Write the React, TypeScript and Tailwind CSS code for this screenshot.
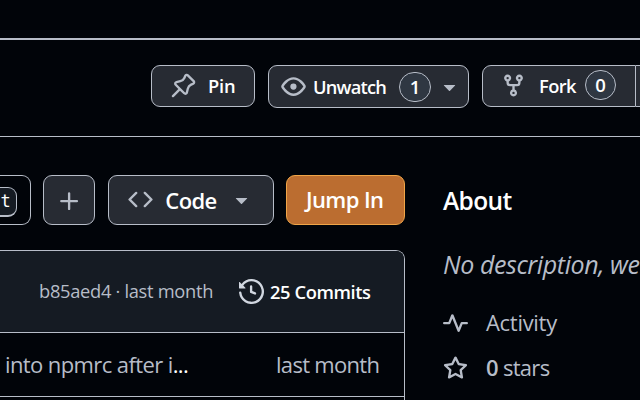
import type { ReactNode } from "react";

const paths = {
  pin: "m11.294.984 3.722 3.722a1.75 1.75 0 0 1-.504 2.826l-1.327.613a3.089 3.089 0 0 0-1.707 2.084l-.584 2.454c-.317 1.332-1.972 1.8-2.94.832L5.75 11.311 1.78 15.28a.749.749 0 1 1-1.06-1.06l3.969-3.97-2.204-2.204c-.968-.968-.5-2.623.832-2.94l2.454-.584a3.08 3.08 0 0 0 2.084-1.707l.613-1.327a1.75 1.75 0 0 1 2.826-.504ZM6.283 9.723l2.732 2.731a.25.25 0 0 0 .42-.119l.584-2.454a4.586 4.586 0 0 1 2.537-3.098l1.328-.613a.25.25 0 0 0 .072-.404l-3.722-3.722a.25.25 0 0 0-.404.072l-.613 1.328a4.584 4.584 0 0 1-3.098 2.537l-2.454.584a.25.25 0 0 0-.119.42l2.731 2.732Z",
  eye: "M8 2c1.981 0 3.671.992 4.933 2.078 1.27 1.091 2.187 2.345 2.637 3.023a1.62 1.62 0 0 1 0 1.798c-.45.678-1.367 1.932-2.637 3.023C11.67 13.008 9.981 14 8 14c-1.981 0-3.671-.992-4.933-2.078C1.797 10.83.88 9.576.43 8.898a1.62 1.62 0 0 1 0-1.798c.45-.677 1.367-1.931 2.637-3.022C4.33 2.992 6.019 2 8 2ZM1.679 7.932a.12.12 0 0 0 0 .136c.411.622 1.241 1.75 2.366 2.717C5.176 11.758 6.527 12.5 8 12.5c1.473 0 2.825-.742 3.955-1.715 1.124-.967 1.954-2.096 2.366-2.717a.12.12 0 0 0 0-.136c-.412-.621-1.242-1.75-2.366-2.717C10.824 4.242 9.473 3.5 8 3.5c-1.473 0-2.825.742-3.955 1.715-1.124.967-1.954 2.096-2.366 2.717ZM8 10a2 2 0 1 1-.001-3.999A2 2 0 0 1 8 10Z",
  fork: "M5 5.372v.878c0 .414.336.75.75.75h4.5a.75.75 0 0 0 .75-.75v-.878a2.25 2.25 0 1 1 1.5 0v.878a2.25 2.25 0 0 1-2.25 2.25h-1.5v2.128a2.251 2.251 0 1 1-1.5 0V8.5h-1.5A2.25 2.25 0 0 1 3.5 6.25v-.878a2.25 2.25 0 1 1 1.5 0ZM5 3.25a.75.75 0 1 0-1.5 0 .75.75 0 0 0 1.5 0Zm6.75.75a.75.75 0 1 0 0-1.5.75.75 0 0 0 0 1.5Zm-3 8.75a.75.75 0 1 0-1.5 0 .75.75 0 0 0 1.5 0Z",
  caret: "m4.427 7.427 3.396 3.396a.25.25 0 0 0 .354 0l3.396-3.396A.25.25 0 0 0 11.396 7H4.604a.25.25 0 0 0-.177.427Z",
  plus: "M7.75 2a.75.75 0 0 1 .75.75V7h4.25a.75.75 0 0 1 0 1.5H8.5v4.25a.75.75 0 0 1-1.5 0V8.5H2.75a.75.75 0 0 1 0-1.5H7V2.75A.75.75 0 0 1 7.75 2Z",
  code: "m11.28 3.22 4.25 4.25a.75.75 0 0 1 0 1.06l-4.25 4.25a.749.749 0 0 1-1.275-.326.749.749 0 0 1 .215-.734L13.94 8l-3.72-3.72a.749.749 0 0 1 .326-1.275.749.749 0 0 1 .734.215Zm-6.56 0a.751.751 0 0 1 1.042.018.751.751 0 0 1 .018 1.042L2.06 8l3.72 3.72a.749.749 0 0 1-.326 1.275.749.749 0 0 1-.734-.215L.47 8.53a.75.75 0 0 1 0-1.06Z",
  history: "m.427 1.927 1.215 1.215a8.002 8.002 0 1 1-1.6 5.685.75.75 0 1 1 1.493-.154 6.5 6.5 0 1 0 1.18-4.458l1.358 1.358A.25.25 0 0 1 3.896 6H.25A.25.25 0 0 1 0 5.75V2.104a.25.25 0 0 1 .427-.177ZM7.75 4a.75.75 0 0 1 .75.75v2.992l2.028.812a.75.75 0 0 1-.557 1.392l-2.5-1A.751.751 0 0 1 7 8.25v-3.5A.75.75 0 0 1 7.75 4Z",
  pulse: "M6 2c.306 0 .582.187.696.471L10 10.731l1.304-3.26A.751.751 0 0 1 12 7h3.25a.75.75 0 0 1 0 1.5h-2.742l-1.812 4.528a.751.751 0 0 1-1.392 0L6 4.77 4.696 8.03A.75.75 0 0 1 4 8.5H.75a.75.75 0 0 1 0-1.5h2.742l1.812-4.529A.751.751 0 0 1 6 2Z",
  star: "M8 .25a.75.75 0 0 1 .673.418l1.882 3.815 4.21.612a.75.75 0 0 1 .416 1.279l-3.046 2.97.719 4.192a.751.751 0 0 1-1.088.791L8 12.347l-3.766 1.98a.75.75 0 0 1-1.088-.79l.72-4.194L.818 6.374a.75.75 0 0 1 .416-1.28l4.21-.611L7.327.668A.75.75 0 0 1 8 .25Zm0 2.445L6.615 5.5a.75.75 0 0 1-.564.41l-3.097.45 2.24 2.184a.75.75 0 0 1 .216.664l-.528 3.084 2.769-1.456a.75.75 0 0 1 .698 0l2.77 1.456-.53-3.084a.75.75 0 0 1 .216-.664l2.24-2.183-3.096-.45a.75.75 0 0 1-.564-.41L8 2.694Z",
};

function Icon({ name, className = "" }: { name: keyof typeof paths; className?: string }) {
  return (
    <svg viewBox="0 0 16 16" className={`size-[25px] shrink-0 fill-current ${className}`} aria-hidden="true">
      <path d={paths[name]} />
    </svg>
  );
}

function Counter({ children, className }: { children: ReactNode; className: string }) {
  return (
    <span className={`flex shrink-0 items-center justify-center rounded-full border border-[#b7bdc8] bg-[#2f3742] text-[18.5px] leading-none ${className}`}>
      {children}
    </span>
  );
}

const button = "flex shrink-0 items-start border border-[#b7bdc8] bg-[#272b33] font-[650] text-white";

function RepoActions() {
  return (
    <div className="flex h-[97px] shrink-0 items-start border-b border-[#b7bdc8] pt-[25px] pl-[151px]">
      <button className={`${button} h-[42px] w-[104px] rounded-[9px] pl-[19px]`}>
        <Icon name="pin" className="mt-[7px] text-[#b7bdc8]" />
        <span className="mt-[6px] ml-3 text-[18.3px] leading-7 tracking-[-0.2px]">Pin</span>
      </button>
      <button className={`${button} ml-[13px] h-[43px] w-[201px] rounded-[9px] pl-3`}>
        <Icon name="eye" className="mt-2 text-[#b7bdc8]" />
        <span className="mt-[7px] ml-[6px] w-[75px] text-[18.3px] leading-7 tracking-[-0.8px]">Unwatch</span>
        <Counter className="mt-[6px] ml-[12px] h-[30px] w-8">1</Counter>
        <Icon name="caret" className="mt-2 ml-[6px] text-[#b7bdc8]" />
      </button>
      <button className={`${button} ml-[13px] h-[42px] w-[154px] rounded-l-[9px] pl-[18px]`}>
        <Icon name="fork" className="mt-[7px] text-[#b7bdc8]" />
        <span className="mt-[6px] ml-3 w-[39px] text-[18.3px] leading-7 tracking-[-0.6px]">Fork</span>
        <Counter className="mt-1 ml-[8px] h-[30px] w-[31px]">0</Counter>
      </button>
      <div className="h-[42px] w-1 shrink-0 border-y border-[#b7bdc8] bg-[#272b33]" />
    </div>
  );
}

function Toolbar() {
  return (
    <div className="flex h-[50px] shrink-0">
      <div className="flex w-[31px] shrink-0 items-start justify-end rounded-r-[9px] border border-l-0 border-[#b7bdc8] pr-[13px]">
        <kbd className="mt-[11px] flex h-[30px] w-[17px] items-start justify-center rounded-r-[9px] border border-b-2 border-l-0 border-[#b7bdc8] bg-[#151b23] pr-[5px] font-['DejaVu_Sans_Mono',monospace] text-[17px] leading-[27px] text-white">
          t
        </kbd>
      </div>
      <button className={`${button} ml-3 w-[52px] rounded-[9px] pt-[13px] pl-[13px]`}>
        <Icon name="plus" className="text-[#b7bdc8]" />
      </button>
      <button className={`${button} ml-[13px] w-[166px] rounded-[9px] pl-[19px]`}>
        <Icon name="code" className="mt-[11px] text-[#b7bdc8]" />
        <span className="mt-2 ml-3 w-[52px] text-[22px] leading-8 tracking-[-0.6px]">Code</span>
        <Icon name="caret" className="mt-[11px] ml-[12px] text-[#b7bdc8]" />
      </button>
      <button className="ml-3 flex w-[119px] shrink-0 items-start rounded-[9px] border border-[#f0a548] bg-[#bb6d30] pt-[7px] pl-[19px] text-[22px] leading-8 font-[650] tracking-[-0.6px] whitespace-nowrap text-white">
        Jump In
      </button>
    </div>
  );
}

function Files() {
  return (
    <div className="mt-[25px] flex w-[405px] grow flex-col rounded-tr-[9px] border-t border-r border-[#b7bdc8]">
      <div className="flex h-[82px] shrink-0 items-start rounded-tr-lg border-b border-[#b7bdc8] bg-[#151b23] pl-[39px] whitespace-nowrap">
        <span className="mt-[26px] w-[175px] text-[18.3px] leading-7 tracking-[-0.3px] text-[#b7bdc8]">b85aed4 · last month</span>
        <Icon name="history" className="mt-7 ml-[25px] text-[#d1d7e0]" />
        <span className="mt-[27px] ml-[6px] text-[18.3px] leading-7 font-[650] tracking-[-0.4px] text-white">25 Commits</span>
      </div>
      <div className="flex h-16 shrink-0 border-b border-[#b7bdc8] pt-[15px] pl-[5px] text-[22px] leading-8 whitespace-nowrap text-[#b7bdc8]">
        <span className="w-[271px] tracking-[-0.6px]">into npmrc after i<span className="text-white">...</span></span>
        <span className="tracking-[-0.7px]">last month</span>
      </div>
    </div>
  );
}

function About() {
  return (
    <aside className="flex w-[197px] shrink-0 flex-col whitespace-nowrap text-[#b7bdc8]">
      <h2 className="mt-2 text-[24.5px] leading-9 font-[650] tracking-[-0.6px] text-white">About</h2>
      <p className="mt-[27px] text-[25px] leading-9 tracking-[-0.4px] italic">No description, we</p>
      <div className="mt-[25px] flex h-[33px] items-center">
        <Icon name="pulse" />
        <span className="mb-[3px] ml-[18px] text-[22px] leading-8 tracking-[-0.3px]">Activity</span>
      </div>
      <div className="mt-3 flex h-[33px] items-center">
        <Icon name="star" />
        <span className="mb-[3px] ml-[18px] text-[22px] leading-8 tracking-[-0.7px]"><strong className="font-semibold">0</strong> stars</span>
      </div>
    </aside>
  );
}

export default function App() {
  return (
    <div className="flex h-[400px] w-[640px] flex-col overflow-hidden bg-[#010409] font-['Open_Sans',sans-serif]">
      <div className="h-10 shrink-0 border-b-2 border-[#b7bdc8]" />
      <RepoActions />
      <main className="flex grow pt-[38px]">
        <section className="mr-[38px] flex w-[405px] shrink-0 flex-col">
          <Toolbar />
          <Files />
        </section>
        <About />
      </main>
    </div>
  );
}
